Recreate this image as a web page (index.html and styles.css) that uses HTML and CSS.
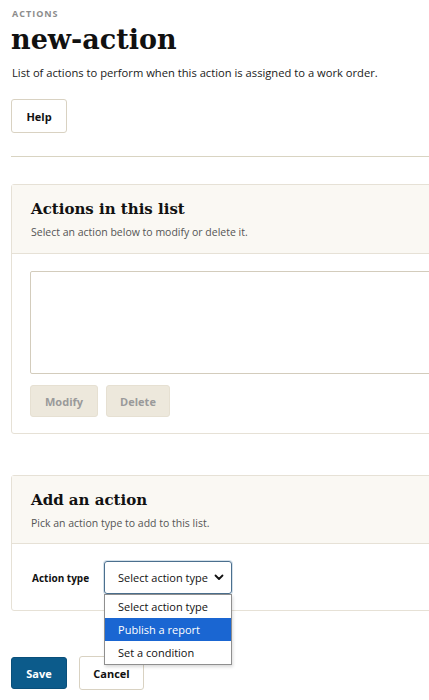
FILE: index.html
```html
<!DOCTYPE html>
<html lang="en">
<head>
<meta charset="utf-8">
<title>new-action</title>
<link rel="stylesheet" href="styles.css">
</head>
<body>
<main class="page">
  <div class="eyebrow">ACTIONS</div>
  <h1 class="title">new-action</h1>
  <p class="desc">List of actions to perform when this action is assigned to a work order.</p>
  <button class="btn btn-help" type="button">Help</button>
  <hr class="rule">

  <section class="card card-list">
    <header class="card-head">
      <h2 class="card-title">Actions in this list</h2>
      <p class="card-sub">Select an action below to modify or delete it.</p>
    </header>
    <div class="card-body">
      <div class="listbox"></div>
      <div class="row-btns">
        <button class="btn btn-disabled" type="button">Modify</button>
        <button class="btn btn-disabled btn-delete" type="button">Delete</button>
      </div>
    </div>
  </section>

  <section class="card card-add">
    <header class="card-head">
      <h2 class="card-title">Add an action</h2>
      <p class="card-sub">Pick an action type to add to this list.</p>
    </header>
    <div class="card-body add-body">
      <span class="field-label">Action type</span>
      <div class="select-wrap">
        <div class="select">
          <span class="select-text">Select action type</span>
          <svg class="chev" width="10" height="7" viewBox="0 0 10 7"><path d="M1.5 1.5 L5 5 L8.5 1.5" fill="none" stroke="#111" stroke-width="1.8" stroke-linecap="round" stroke-linejoin="round"/></svg>
        </div>
        <ul class="options">
          <li class="opt">Select action type</li>
          <li class="opt opt-active">Publish a report</li>
          <li class="opt">Set a condition</li>
        </ul>
      </div>
    </div>
  </section>

  <div class="footer-btns">
    <button class="btn btn-save" type="button">Save</button>
    <button class="btn btn-cancel" type="button">Cancel</button>
  </div>
</main>
</body>
</html>
```

FILE: styles.css
```css
html, body {
  margin: 0;
  padding: 0;
  background: #ffffff;
}
body {
  font-family: "Open Sans", "Noto Sans", sans-serif;
  color: #1a1a1a;
}
.page {
  padding: 0 0 40px 11px;
  overflow: hidden;
}
.eyebrow {
  margin-top: 8px;
  font-size: 9px;
  line-height: 12px;
  font-weight: 700;
  letter-spacing: 1px;
  color: #8c8c8c;
  padding-left: 1px;
}
.title {
  margin: 2px 0 0;
  font-family: "DejaVu Serif", "Liberation Serif", serif;
  font-weight: 700;
  font-size: 27px;
  line-height: 36px;
  color: #111;
}
.desc {
  margin: 7px 0 0;
  font-size: 11.2px;
  line-height: 16px;
  padding-left: 1px;
  white-space: nowrap;
}
.btn {
  font-family: "Open Sans", "Noto Sans", sans-serif;
  font-weight: 700;
  font-size: 11px;
  border-radius: 3px;
  cursor: pointer;
  box-sizing: border-box;
}
.btn-help {
  display: block;
  margin-top: 18px;
  width: 56px;
  height: 34px;
  background: #fff;
  border: 1px solid #d9d2c2;
  color: #111;
}
.rule {
  margin: 23px 0 0;
  border: 0;
  border-top: 1px solid #d9d4c2;
  height: 0;
}
.card {
  width: calc(100% + 60px);
  box-sizing: border-box;
  border: 1px solid #e6e1d6;
  border-radius: 3px;
  background: #fff;
}
.card-list { margin-top: 27px; }
.card-add { margin-top: 41px; }
.card-head {
  background: #faf8f3;
  border-bottom: 1px solid #e6e1d6;
  padding: 13px 19px 0;
  height: 55px;
}
.card-add .card-head { height: 54px; }
.card-title {
  margin: 0;
  font-family: "DejaVu Serif", "Liberation Serif", serif;
  font-weight: 700;
  font-size: 15px;
  line-height: 22px;
  color: #111;
}
.card-sub {
  margin: 5px 0 0;
  font-size: 10.5px;
  line-height: 14px;
  color: #555;
}
.card-body {
  padding: 17px 18px 16px;
}
.listbox {
  height: 103px;
  box-sizing: border-box;
  border: 1px solid #d3ccbc;
  border-radius: 2px;
  background: #fff;
}
.row-btns {
  display: flex;
  gap: 8px;
  margin-top: 11px;
}
.btn-disabled {
  height: 32px;
  width: 68px;
  background: #ede8dc;
  border: 1px solid #e6e0d2;
  color: #9a9a9a;
}
.btn-delete { width: 64px; }
.add-body {
  display: flex;
  align-items: center;
  gap: 15px;
  padding: 17px 18px 16px 20px;
}
.field-label {
  font-size: 10px;
  font-weight: 700;
  color: #111;
  white-space: nowrap;
}
.select-wrap {
  position: relative;
}
.select {
  width: 128px;
  height: 33px;
  box-sizing: border-box;
  border: 1px solid #4b6f8e;
  border-radius: 3px;
  box-shadow: 0 0 0 1px #d5e1ea;
  display: flex;
  align-items: center;
  justify-content: space-between;
  padding: 0 7px 0 13px;
  font-size: 11px;
  color: #111;
}
.select-text { white-space: nowrap; }
.options {
  position: absolute;
  left: 0;
  top: 33px;
  width: 128px;
  box-sizing: border-box;
  margin: 0;
  padding: 0;
  list-style: none;
  background: #fff;
  border: 1px solid #8f8f8f;
  box-shadow: 1px 2px 3px rgba(0,0,0,0.15);
  z-index: 5;
}
.opt {
  height: 23px;
  line-height: 23px;
  padding-left: 13px;
  font-size: 11px;
  color: #111;
  white-space: nowrap;
}
.opt-active {
  background: #1a66d2;
  color: #fff;
}
.footer-btns {
  display: flex;
  align-items: center;
  gap: 12px;
  margin-top: 45px;
}
.btn-save {
  width: 56px;
  height: 32px;
  background: #0c5b8b;
  border: 1px solid #0a4f7a;
  color: #fff;
}
.btn-cancel {
  width: 65px;
  height: 34px;
  background: #fff;
  border: 1px solid #d9d2c2;
  color: #111;
}
```
